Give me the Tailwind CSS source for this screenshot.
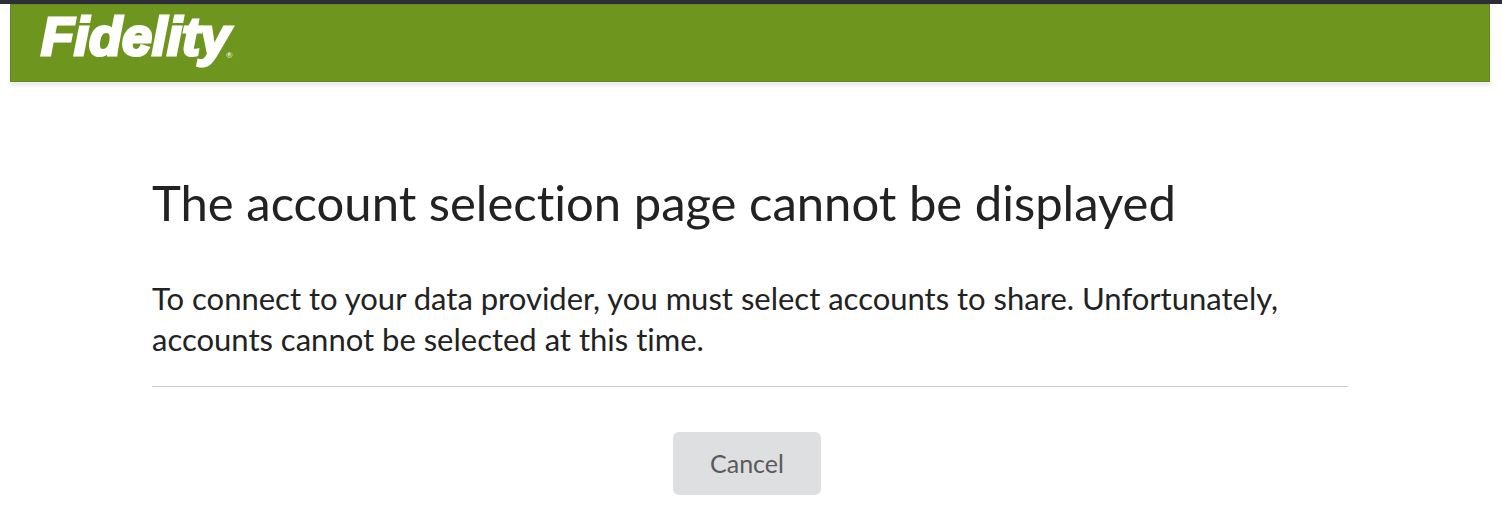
<!DOCTYPE html>
<html lang="en">
<head>
  <meta charset="UTF-8" />
  <meta name="viewport" content="width=device-width, initial-scale=1.0" />
  <title>Fidelity</title>
  <script src="https://cdn.jsdelivr.net/npm/@tailwindcss/browser@4"></script>
</head>
<body class="bg-white font-['Lato',sans-serif] text-[#222222] border-t-4 border-[#2e2e38] [font-variant-ligatures:none]">

  <header class="ml-[10px] mr-3 h-[78px] px-[30px] flex items-start bg-[#6e961f] border border-[#64881e] shadow-[0_4px_4px_rgba(0,0,0,0.08)]">
    <a href="/" class="flex items-end text-white no-underline">
      <span class="font-['Liberation_Sans',sans-serif] font-bold italic text-[54px] leading-[62px] [-webkit-text-stroke:3px_white]">Fidelity</span>
      <span class="-ml-1 mb-2 text-[8px] leading-none">®</span>
    </a>
  </header>

  <main class="ml-[152px] mr-[154px] pt-24">
    <h1 class="text-[49px] leading-[48px]">The account selection page cannot be displayed</h1>

    <p class="mt-[52px] pb-[26px] text-[31px] leading-[41px] border-b border-[#cccccc]">
      To connect to your data provider, you must select accounts to share. Unfortunately, accounts cannot be selected at this time.
    </p>

    <div class="mt-[45px] pr-[6px] flex justify-center">
      <button type="button" class="w-[148px] h-[63px] rounded-md bg-[#dedfe1] text-[25px] text-[#5a5a5a] cursor-pointer hover:bg-[#d2d3d5]">Cancel</button>
    </div>
  </main>

</body>
</html>
